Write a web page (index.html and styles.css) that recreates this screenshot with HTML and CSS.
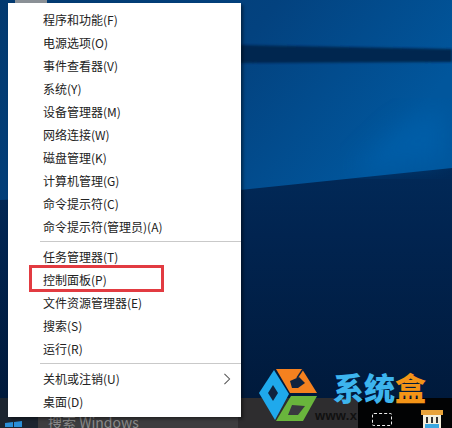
FILE: index.html
```html
<!DOCTYPE html>
<html lang="zh-CN">
<head>
  <meta charset="UTF-8">
  <title>控制面板</title>
  <link rel="stylesheet" href="styles.css">
</head>
<body>
  <div class="desktop">
    <!-- wallpaper -->
    <svg class="wallpaper" width="452" height="428" viewBox="0 0 452 428">
      <defs>
        <linearGradient id="sky" x1="0" y1="0" x2="1" y2="0.35">
          <stop offset="0" stop-color="#033a70"/>
          <stop offset="0.55" stop-color="#03427f"/>
          <stop offset="1" stop-color="#01569c"/>
        </linearGradient>
        <linearGradient id="floor" x1="0" y1="0" x2="0" y2="1">
          <stop offset="0" stop-color="#02356a"/>
          <stop offset="0.55" stop-color="#012450"/>
          <stop offset="1" stop-color="#001838"/>
        </linearGradient>
        <filter id="soft"><feGaussianBlur stdDeviation="1.2"/></filter>
        <filter id="softer"><feGaussianBlur stdDeviation="12"/></filter>
      </defs>
      <rect width="452" height="428" fill="url(#floor)"/>
      <polygon points="0,0 452,0 452,168 240,190 0,200" fill="url(#sky)"/>
      <polygon points="240,45 452,49 452,62 240,63" fill="#032650" filter="url(#soft)"/>
      <polygon points="350,172 445,160 445,105 400,125" fill="#0364b0" opacity="0.55" filter="url(#softer)"/>
    </svg>

    <div class="menu">
      <ul class="menu-group">
        <li>程序和功能(F)</li>
        <li>电源选项(O)</li>
        <li>事件查看器(V)</li>
        <li>系统(Y)</li>
        <li>设备管理器(M)</li>
        <li>网络连接(W)</li>
        <li>磁盘管理(K)</li>
        <li>计算机管理(G)</li>
        <li>命令提示符(C)</li>
        <li>命令提示符(管理员)(A)</li>
      </ul>
      <ul class="menu-group">
        <li>任务管理器(T)</li>
        <li class="marked">控制面板(P)</li>
        <li>文件资源管理器(E)</li>
        <li>搜索(S)</li>
        <li>运行(R)</li>
      </ul>
      <ul class="menu-group">
        <li class="has-sub">关机或注销(U)
          <svg width="8" height="12" viewBox="0 0 8 14"><path d="M1 1l6 6-6 6" fill="none" stroke="#555" stroke-width="1.2"/></svg>
        </li>
        <li>桌面(D)</li>
      </ul>
    </div>

    <div class="taskbar">
      <div class="start">
        <svg width="17" height="14" viewBox="0 0 17 14"><path d="M0 3l8-1v5H0zM9 2l8-1v6H9zM0 8h8v5l-8-1zM9 8h8v6l-8-1z" fill="#2a8fd8"/></svg>
      </div>
      <div class="search">搜索 Windows</div>
      <div class="site">www.x</div>
      <div class="tray">
        <span class="tray-frame"></span>
        <svg width="24" height="18" viewBox="0 0 24 18"><path d="M1 0h22v5H1z" fill="#e8a33a"/><path d="M3 5h18v13H3z" fill="#f4f0dc"/><path d="M6 7h2v6H6zM11 7h2v6h-2zM16 7h2v6h-2z" fill="#333"/><path d="M5 14h14v4H5z" fill="#3aa7e0"/></svg>
      </div>
    </div>

    <!-- watermark logo -->
    <div class="logo">
      <svg width="60" height="56" viewBox="0 0 60 56">
        <polygon points="17,1 43,1 58,25 31,25" fill="#f5811f"/>
        <polygon points="31,13 40,9 46,15 39,20 33,20" fill="#10233f"/>
        <path d="M44 1L38 10" stroke="#10233f" stroke-width="1.5"/>
        <polygon points="15,2 0,25 16,52 30,26" fill="#1fa9ec"/>
        <polygon points="14,17 9,25 14,33 19,25" fill="#10233f"/>
        <polygon points="32,28 58,28 44,53 17,53" fill="#69b53c"/>
        <polygon points="33,37 46,38 39,47 29,47" fill="#39393f"/>
      </svg>
      <span class="logo-name">系统<b>盒</b></span>
    </div>
  </div>
</body>
</html>
```

FILE: styles.css
```css
* {
  box-sizing: border-box;
}
body {
  margin: 0;
  font-family: "Noto Sans CJK SC", "Liberation Sans", sans-serif;
}
.desktop {
  position: relative;
  width: 452px;
  height: 428px;
  overflow: hidden;
  background: #012450;
}
.wallpaper {
  position: absolute;
  left: 0;
  top: 0;
}

/* context menu */
.menu {
  position: absolute;
  left: 8px;
  top: 3px;
  width: 233px;
  height: 414px;
  padding-top: 5px;
  background: #fff;
  box-shadow: 2px 2px 3px rgba(0,0,0,0.45);
  z-index: 2;
}
.menu::before {
  content: "";
  position: absolute;
  left: 7px;
  top: -3px;
  width: 32px;
  height: 3px;
  background: #8a9096;
}
.menu-group {
  list-style: none;
  margin: 0 0 3px 32px;
  padding: 0 0 3px;
  border-bottom: 1px solid #c9c9c9;
}
.menu-group:last-child {
  border-bottom: none;
}
.menu-group li {
  position: relative;
  height: 23px;
  line-height: 23px;
  padding-left: 3px;
  font-size: 12px;
  color: #222;
  white-space: nowrap;
}
.marked::after {
  content: "";
  position: absolute;
  left: -11px;
  top: -3px;
  width: 129px;
  height: 21px;
  border: 3px solid #e23b41;
}
.has-sub svg {
  position: absolute;
  right: 10px;
  top: 6px;
}

/* taskbar */
.taskbar {
  position: absolute;
  left: 0;
  right: 0;
  bottom: 0;
  height: 30px;
  display: flex;
  background: #2e2d2f;
}
.start {
  width: 38px;
  padding: 17px 0 0 5px;
  background: #1c2530;
}
.search {
  width: 200px;
  padding: 15px 0 0 10px;
  background: #3d3d3f;
  color: #8a8a8a;
  font-size: 14px;
  line-height: 18px;
}
.site {
  width: 120px;
  padding: 10px 0 0 77px;
  font-family: "Liberation Sans", sans-serif;
  font-size: 13px;
  font-weight: bold;
  letter-spacing: 0.3px;
  color: #111;
}
.tray {
  flex: 1;
  display: flex;
  gap: 28px;
  padding: 12px 0 0 14px;
  background: #020304;
}
.tray-frame {
  width: 20px;
  height: 13px;
  margin-top: 3px;
  border: 1px dashed #eee;
  border-radius: 2px;
}

.logo {
  position: absolute;
  left: 259px;
  top: 368px;
  display: flex;
  gap: 14px;
  z-index: 1;
}
.logo-name {
  font-size: 31px;
  line-height: 38px;
  font-weight: 900;
  color: #3db5ee;
}
.logo-name b {
  color: #f39417;
}
```
